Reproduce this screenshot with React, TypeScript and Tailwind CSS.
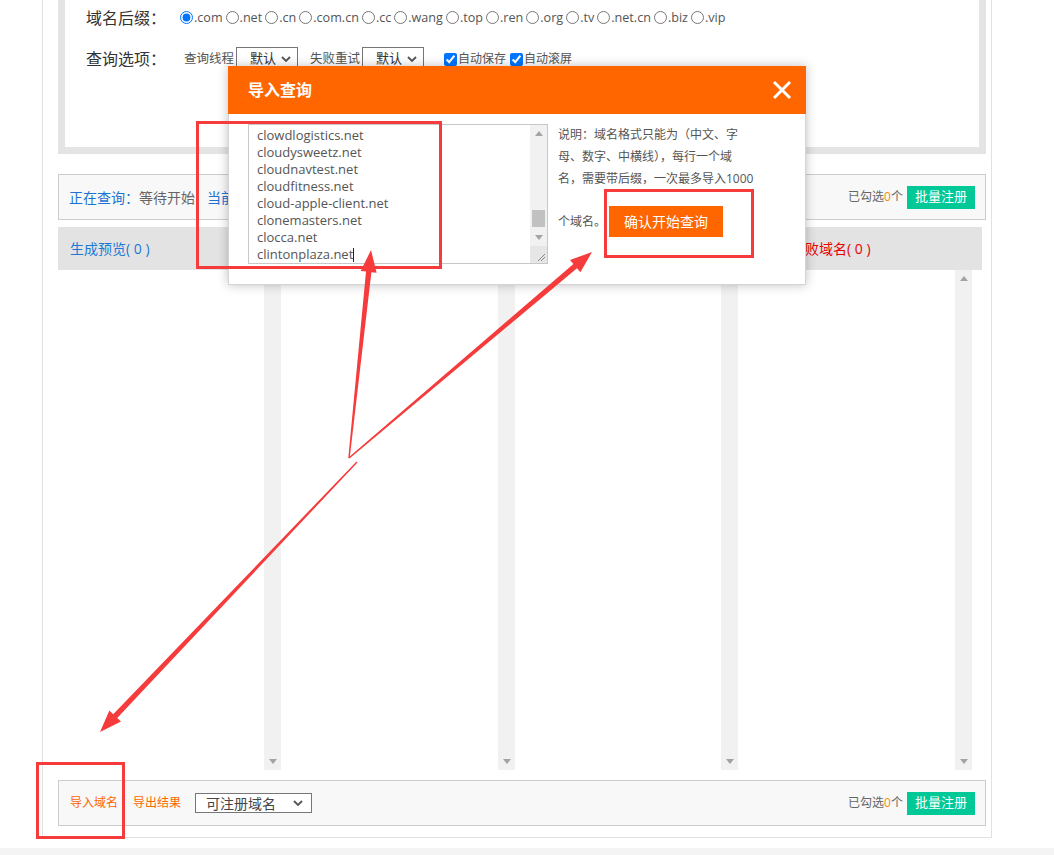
import React from "react";

const FONT = '"Open Sans", "Noto Sans CJK SC", sans-serif';

function arrowPoints(x1: number, y1: number, x2: number, y2: number, headLen = 22, headW = 16, w0 = 1.5, w1 = 5.5) {
  const dx = x2 - x1;
  const dy = y2 - y1;
  const L = Math.sqrt(dx * dx + dy * dy);
  const ux = dx / L;
  const uy = dy / L;
  const px = -uy;
  const py = ux;
  const bx = x2 - ux * headLen;
  const by = y2 - uy * headLen;
  const pts = [
    [x1 + (px * w0) / 2, y1 + (py * w0) / 2],
    [bx + (px * w1) / 2, by + (py * w1) / 2],
    [bx + (px * headW) / 2, by + (py * headW) / 2],
    [x2, y2],
    [bx - (px * headW) / 2, by - (py * headW) / 2],
    [bx - (px * w1) / 2, by - (py * w1) / 2],
    [x1 - (px * w0) / 2, y1 - (py * w0) / 2],
  ];
  return pts.map((p) => `${p[0].toFixed(1)},${p[1].toFixed(1)}`).join(" ");
}

function UpArrow() {
  return (
    <svg width="8" height="5" viewBox="0 0 8 5">
      <polygon points="0,5 8,5 4,0" fill="#a3a3a3" />
    </svg>
  );
}
function DownArrow() {
  return (
    <svg width="8" height="5" viewBox="0 0 8 5">
      <polygon points="0,0 8,0 4,5" fill="#a3a3a3" />
    </svg>
  );
}

function Chevron() {
  return (
    <svg width="10" height="7" viewBox="0 0 10 7">
      <polyline points="1,1 5,5 9,1" fill="none" stroke="#555" strokeWidth="1.8" />
    </svg>
  );
}

function Column({ content }: { content: number }) {
  return (
    <div className="flex h-full">
      <div className="h-full bg-white" style={{ width: content }} />
      <div className="flex h-full w-[17px] flex-col items-center justify-between bg-[#f1f1f1] py-[6px]">
        <UpArrow />
        <DownArrow />
      </div>
    </div>
  );
}

function SelectBox({ label, w }: { label: string; w: string }) {
  return (
    <div className={`flex h-[24px] items-center justify-between border border-[#767676] bg-white pl-[13px] pr-[6px] text-[13px] text-[#333] ${w}`}>
      <span>{label}</span>
      <Chevron />
    </div>
  );
}

function Selected() {
  return (
    <div className="flex items-center text-[12px] text-[#666]">
      <span>已勾选</span>
      <span className="text-[#ff8a00]">0</span>
      <span>个</span>
      <button className="ml-[4px] flex h-[23px] w-[68px] items-center justify-center bg-[#00c897] text-[13px] text-white">
        批量注册
      </button>
    </div>
  );
}

const suffixes = [".com", ".net", ".cn", ".com.cn", ".cc", ".wang", ".top", ".ren", ".org", ".tv", ".net.cn", ".biz", ".vip"];

const domains = [
  "clowdlogistics.net",
  "cloudysweetz.net",
  "cloudnavtest.net",
  "cloudfitness.net",
  "cloud-apple-client.net",
  "clonemasters.net",
  "clocca.net",
  "clintonplaza.net",
];

export default function App() {
  return (
    <div className="relative h-[855px] w-[1054px] overflow-hidden bg-white" style={{ fontFamily: FONT }}>
      <div className="ml-[42px] h-[838px] w-[950px] border-x border-b border-[#e2e2e2] pl-[15px] pr-[5px]">
        {/* top settings box */}
        <div className="h-[154px] border-x-[7px] border-b-[7px] border-[#e4e4e4] bg-white pl-[21px]">
          <div className="flex h-[36px] items-center">
            <span className="w-[75px] whitespace-nowrap text-[16px] text-[#333]">域名后缀：</span>
            <div className="ml-[19px] flex items-center text-[12.6px] text-[#555]">
              {suffixes.map((s, i) => (
                <label key={s} className={`flex items-center ${i === 0 ? "" : "ml-[3px]"}`}>
                  <input type="radio" name="sfx" defaultChecked={i === 0} className="m-0 mr-[1px] h-[13px] w-[13px]" />
                  <span>{s}</span>
                </label>
              ))}
            </div>
          </div>
          <div className="mt-[11px] flex h-[24px] items-center">
            <span className="w-[75px] whitespace-nowrap text-[16px] text-[#333]">查询选项：</span>
            <span className="ml-[23px] w-[52px] text-[12.5px] text-[#555]">查询线程</span>
            <SelectBox label="默认" w="w-[62px]" />
            <span className="ml-[12px] w-[52px] text-[12.5px] text-[#555]">失败重试</span>
            <SelectBox label="默认" w="w-[62px]" />
            <label className="ml-[20px] flex items-center text-[12px] text-[#555]">
              <input type="checkbox" defaultChecked className="m-0 mr-[1px] h-[13px] w-[13px]" />
              <span>自动保存</span>
            </label>
            <label className="ml-[4px] flex items-center text-[12px] text-[#555]">
              <input type="checkbox" defaultChecked className="m-0 mr-[1px] h-[13px] w-[13px]" />
              <span>自动滚屏</span>
            </label>
          </div>
        </div>

        {/* status row */}
        <div className="mt-[20px] flex h-[46px] items-center justify-between border border-[#cccccc] bg-[#f8f8f8] pl-[10px] pr-[10px]">
          <div className="flex items-center text-[14px]">
            <span className="text-[#1a73d2]">正在查询：</span>
            <span className="text-[#666]">等待开始</span>
            <span className="ml-[12px] text-[#1a73d2]">当前进度：0/0</span>
          </div>
          <Selected />
        </div>

        {/* header row */}
        <div className="mr-[4px] mt-[7px] grid h-[43px] grid-cols-4 items-center bg-[#e3e3e3] text-[14px]">
          <span className="pl-[12px] text-[#1a7ad6]">生成预览( 0 )</span>
          <span className="pl-[12px] text-[#13a86b]">可注册域名( 0 )</span>
          <span className="pl-[12px] text-[#666]">已注册域名( 0 )</span>
          <span className="pl-[12px] text-[#e60000]">查询失败域名( 0 )</span>
        </div>

        {/* columns */}
        <div className="flex h-[500px]">
          <Column content={206} />
          <Column content={217} />
          <Column content={206} />
          <Column content={217} />
        </div>

        {/* bottom row */}
        <div className="mt-[10px] flex h-[46px] items-center justify-between border border-[#cccccc] bg-[#f8f8f8] pl-[11px] pr-[10px]">
          <div className="flex items-center text-[12px] text-[#ff6600]">
            <span>导入域名</span>
            <span className="ml-[15px]">导出结果</span>
            <div className="ml-[14px] flex h-[20px] w-[117px] items-center justify-between border border-[#777] bg-white pl-[10px] pr-[8px] text-[14px] text-[#444]">
              <span>可注册域名</span>
              <Chevron />
            </div>
          </div>
          <Selected />
        </div>
      </div>
      <div className="mt-[10px] h-[7px] bg-[#f4f4f4]" />

      {/* modal */}
      <div
        className="absolute left-[228px] top-[66px] h-[219px] w-[578px] border border-[#d4d4d4] bg-white"
        style={{ boxShadow: "0 0 10px rgba(0,0,0,0.25)" }}
      >
        <div className="-mx-px -mt-px flex h-[48px] items-center justify-between bg-[#ff6600] pl-[20px] pr-[14px]">
          <span className="text-[16px] font-bold text-white">导入查询</span>
          <svg width="20" height="20" viewBox="0 0 20 20">
            <line x1="2" y1="2" x2="18" y2="18" stroke="white" strokeWidth="3" />
            <line x1="18" y1="2" x2="2" y2="18" stroke="white" strokeWidth="3" />
          </svg>
        </div>
        <div className="flex items-start pl-[19px] pt-[10px]">
          <div className="flex h-[140px] w-[300px] border border-[#c8c8c8]">
            <div className="flex-1 overflow-hidden pl-[8px] pt-[2px] text-[13px] leading-[17px] text-[#555]">
              {domains.map((d, i) => (
                <div key={d} className="flex h-[17px] items-center whitespace-nowrap">
                  <span>{d}</span>
                  {i === domains.length - 1 ? <span className="inline-block h-[14px] w-px bg-[#222]" /> : null}
                </div>
              ))}
            </div>
            <div className="flex w-[17px] flex-col bg-[#f1f1f1]">
              <div className="flex h-[17px] items-center justify-center">
                <UpArrow />
              </div>
              <div className="relative flex-1">
                <div className="absolute left-[2px] top-[68px] h-[17px] w-[13px] bg-[#c1c1c1]" />
              </div>
              <div className="flex h-[17px] items-center justify-center">
                <DownArrow />
              </div>
              <div className="flex h-[17px] items-end justify-end bg-[#e6e6e6] p-[2px]">
                <svg width="8" height="8" viewBox="0 0 8 8">
                  <line x1="1" y1="8" x2="8" y2="1" stroke="#888" strokeWidth="1" />
                  <line x1="4" y1="8" x2="8" y2="4" stroke="#888" strokeWidth="1" />
                </svg>
              </div>
            </div>
          </div>
          <div className="ml-[10px] text-[12px] leading-[22px] text-[#555]">
            <div className="whitespace-nowrap">说明：域名格式只能为（中文、字</div>
            <div className="whitespace-nowrap">母、数字、中横线），每行一个域</div>
            <div className="whitespace-nowrap">名，需要带后缀，一次最多导入1000</div>
            <div className="mt-[16px] flex items-center whitespace-nowrap">
              <span>个域名。</span>
              <button className="ml-[3px] flex h-[31px] w-[114px] items-center justify-center bg-[#ff6600] text-[14px] text-white">
                确认开始查询
              </button>
            </div>
          </div>
        </div>
      </div>

      {/* annotations */}
      <svg className="pointer-events-none absolute left-0 top-0" width="1054" height="855" viewBox="0 0 1054 855">
        <rect x="197.5" y="122.5" width="243" height="145" fill="none" stroke="#f53b3b" strokeWidth="3" />
        <rect x="605.5" y="190.5" width="147" height="66" fill="none" stroke="#f53b3b" strokeWidth="3" />
        <rect x="37.5" y="763.5" width="86" height="74" fill="none" stroke="#f53b3b" strokeWidth="3" />
        <polygon points={arrowPoints(349, 458, 371, 250)} fill="#f53b3b" />
        <polygon points={arrowPoints(349, 458, 592, 252)} fill="#f53b3b" />
        <polygon points={arrowPoints(357, 462, 100, 732)} fill="#f53b3b" />
      </svg>
    </div>
  );
}
